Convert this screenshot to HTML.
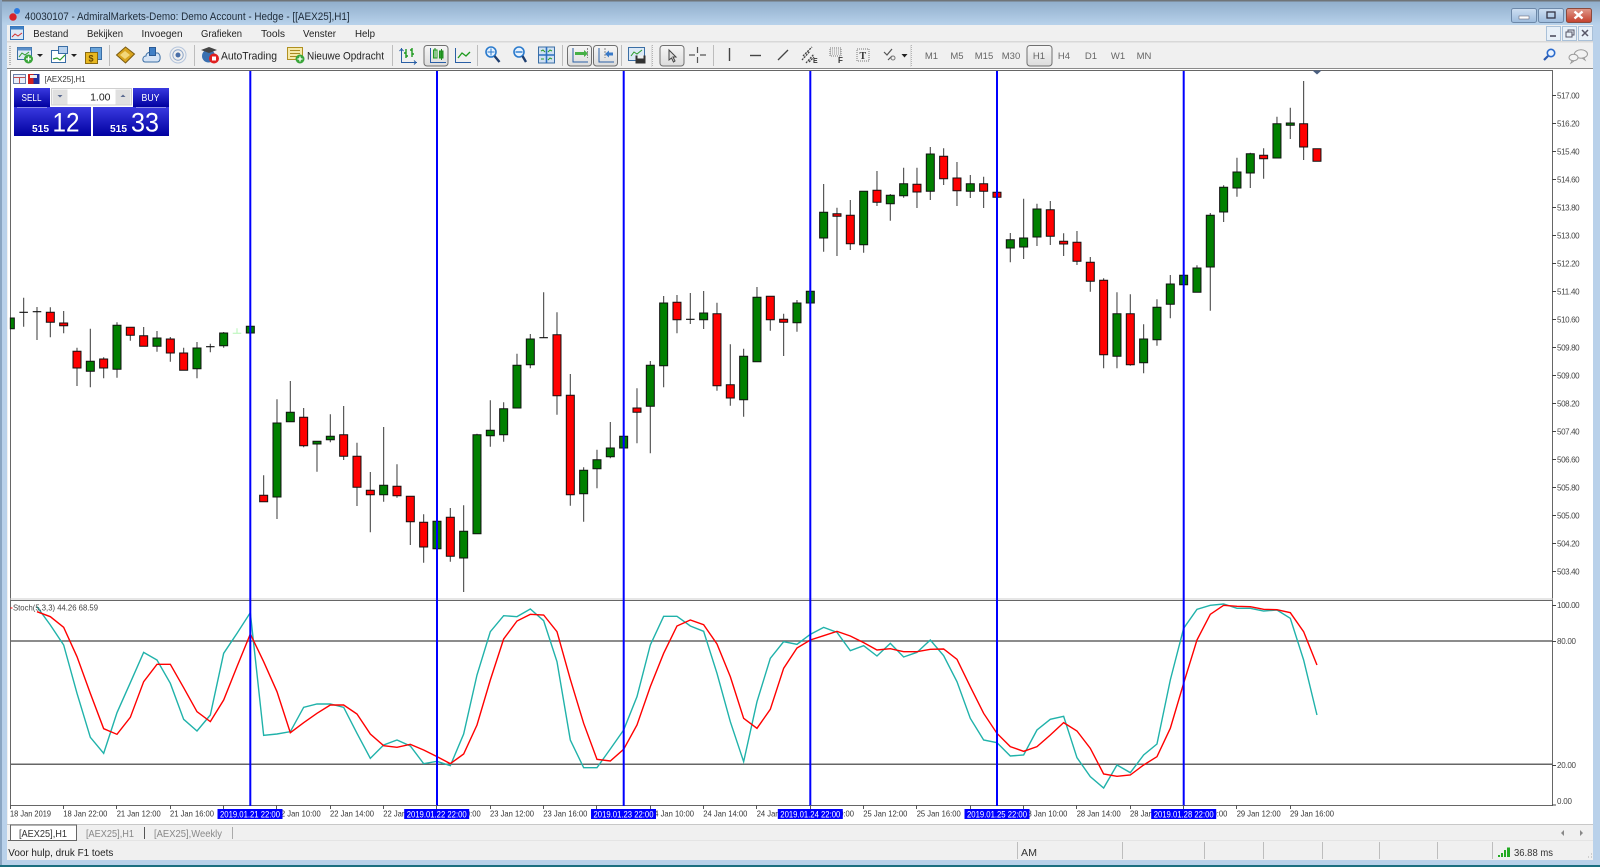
<!DOCTYPE html>
<html><head><meta charset="utf-8"><title>MT5</title>
<style>
html,body{margin:0;padding:0;width:1600px;height:867px;overflow:hidden;background:#b9d1ea}
svg{display:block;filter:blur(.35px);font-family:"Liberation Sans",sans-serif}
.a{font-size:8px;fill:#444}
.t{font-size:8.5px;fill:#333}
.m{font-size:10.5px;fill:#222}
.tf{font-size:9.5px;fill:#666;text-anchor:middle}
.ns{vector-effect:non-scaling-stroke;fill:none}
.hl{font-size:9px;fill:#fff}
</style></head><body>
<svg width="1600" height="867" viewBox="0 0 1600 867" xmlns="http://www.w3.org/2000/svg">
<defs>
<linearGradient id="tb" x1="0" y1="0" x2="0" y2="1"><stop offset="0" stop-color="#8eacca"/><stop offset="1" stop-color="#b8d2eb"/></linearGradient>
<linearGradient id="bl" x1="0" y1="0" x2="0" y2="1"><stop offset="0" stop-color="#3a3ae0"/><stop offset="1" stop-color="#0000a0"/></linearGradient>
<linearGradient id="bt" x1="0" y1="0" x2="0" y2="1"><stop offset="0" stop-color="#f6f6f6"/><stop offset="1" stop-color="#dcdcdc"/></linearGradient>
<linearGradient id="wb" x1="0" y1="0" x2="0" y2="1"><stop offset="0" stop-color="#cfe0f2"/><stop offset="1" stop-color="#9dbbdc"/></linearGradient>
<linearGradient id="wr" x1="0" y1="0" x2="0" y2="1"><stop offset="0" stop-color="#e09a8c"/><stop offset="1" stop-color="#c4402c"/></linearGradient>
</defs>
<!-- frame -->
<rect width="1600" height="867" fill="#b9d1ea"/>
<rect width="1600" height="25" fill="url(#tb)"/>
<rect width="1600" height="1.5" fill="#6f7478"/>
<rect x="0" y="0" width="2" height="867" fill="#8aa5c2"/>
<rect y="865" width="1600" height="2" fill="#1c6f80"/>
<rect x="7" y="25" width="1586" height="835" fill="#f0f0f0"/>
<rect x="7" y="41" width="1586" height="1.5" fill="#d8d8d8"/>
<rect x="7" y="68" width="1586" height="1" fill="#8a8a8a"/>
<rect x="8" y="69" width="1585" height="755" fill="#fff"/>
<rect x="7" y="824" width="1586" height="1" fill="#c8c8c8"/>
<rect x="7" y="840" width="1586" height="1" fill="#e4e4e4"/>
<!-- title -->
<circle cx="13" cy="17" r="3.7" fill="#d8232a"/><circle cx="17" cy="11" r="3" fill="#2a7ae0"/>
<text x="24.7" y="20" font-size="11" fill="#1d2a38" textLength="325" lengthAdjust="spacingAndGlyphs">40030107 - AdmiralMarkets-Demo: Demo Account - Hedge - [[AEX25],H1]</text>
<!-- window buttons -->
<rect x="1511.5" y="8.5" width="25" height="14" rx="2" fill="url(#wb)" stroke="#6d88a8"/><rect x="1519" y="16" width="10" height="3" fill="#fff" stroke="#556"  stroke-width=".5"/>
<rect x="1538.5" y="8.5" width="25" height="14" rx="2" fill="url(#wb)" stroke="#6d88a8"/><rect x="1547" y="12" width="8" height="6" fill="none" stroke="#334" stroke-width="1.3"/>
<rect x="1566.5" y="8.5" width="25" height="14" rx="2" fill="url(#wr)" stroke="#8a4a3c"/><path d="M1574.5 11.5l8 7M1582.5 11.5l-8 7" stroke="#fff" stroke-width="2.4"/>
<!-- menu -->
<rect x="10.5" y="26.5" width="13" height="13" fill="#dce8f5" stroke="#2f6fb5"/><rect x="10.5" y="26.5" width="13" height="3" fill="#3e7fc4"/><path d="M12 37l3-3 3 2 4-3" stroke="#d03030" fill="none"/>
<text class="m" x="33.3" y="37" textLength="35" lengthAdjust="spacingAndGlyphs">Bestand</text>
<text class="m" x="87" y="37" textLength="36" lengthAdjust="spacingAndGlyphs">Bekijken</text>
<text class="m" x="141.5" y="37" textLength="41" lengthAdjust="spacingAndGlyphs">Invoegen</text>
<text class="m" x="201" y="37" textLength="41" lengthAdjust="spacingAndGlyphs">Grafieken</text>
<text class="m" x="261" y="37" textLength="24" lengthAdjust="spacingAndGlyphs">Tools</text>
<text class="m" x="303" y="37" textLength="33" lengthAdjust="spacingAndGlyphs">Venster</text>
<text class="m" x="355" y="37" textLength="20" lengthAdjust="spacingAndGlyphs">Help</text>
<g fill="#e8f0f8" stroke="#a9c0d8"><rect x="1546.5" y="26.5" width="14" height="14"/><rect x="1562.5" y="26.5" width="14" height="14"/><rect x="1578.5" y="26.5" width="14" height="14"/></g>
<path d="M1550 36h6" stroke="#445" stroke-width="1.5"/><path d="M1566 32h6v5h-6zM1568 32v-2h6v5h-2" fill="none" stroke="#556"/><path d="M1582 30l6 6M1588 30l-6 6" stroke="#556" stroke-width="1.5"/>
<!-- toolbar -->
<g stroke="#bdbdbd"><path d="M109.5 45v21M194.5 45v21M392.5 45v21M477.5 45v21M562.5 45v21M621.5 45v21M713.5 45v21"/></g>
<path d="M10 46v20M652 45v22M911 45v22" stroke="#b5b5b5" stroke-dasharray="1 1" stroke-width="2"/>
<path d="M651.5 45v22M910.5 45v22" stroke="#ddd"/>
<!-- i1 -->
<rect x="17.5" y="47.5" width="14" height="12" fill="#dce9f6" stroke="#3a6ea5"/><rect x="17.5" y="47.5" width="14" height="3" fill="#5b8fc9"/><path d="M19 57l3-4 3 2 4-3" stroke="#2a9a2a" fill="none"/><circle cx="28.5" cy="59" r="4.5" fill="#3aa63a"/><path d="M26 59h5M28.5 56.5v5" stroke="#fff" stroke-width="1.3"/><path d="M37 54h6l-3 3z" fill="#222"/>
<!-- i2 -->
<rect x="51.5" y="50.5" width="14" height="12" fill="#fff" stroke="#3a6ea5"/><rect x="58.5" y="46.5" width="9" height="7" fill="#b9d3ef" stroke="#3a6ea5"/><path d="M53 59l4-1 3 2 5-5" stroke="#2a9a2a" fill="none" stroke-width="1.2"/><path d="M71 54h6l-3 3z" fill="#222"/>
<!-- i3 -->
<rect x="90.5" y="47.5" width="11" height="12" fill="#6aa4da" stroke="#3a6ea5"/><rect x="85.5" y="52.5" width="12" height="11" fill="#e8b820" stroke="#8a6a10"/><text x="88.5" y="61.5" font-size="9" font-weight="bold" fill="#6a4a00">$</text>
<!-- i4 -->
<path d="M116.5 55l9-8 9 7-9 9z" fill="#d9a520" stroke="#7a5a10"/><path d="M120 55l5-4 5 4-5 4z" fill="#f3d77a"/>
<!-- i5 -->
<path d="M145 62c-3 0-3-6 1-6 0-3 3-4 4-3h8c3 2 3 9-1 9z" fill="#d6e4f5" stroke="#3a6ea5"/><rect x="149.5" y="47.5" width="6" height="8" fill="#3f7fc6" stroke="#2a5a95"/>
<!-- i6 -->
<g fill="none"><circle cx="178" cy="55" r="8" stroke="#b5c5dc"/><circle cx="178" cy="55" r="5.2" stroke="#8ea6c8"/></g><circle cx="178" cy="55" r="2.5" fill="#4a6fa8"/>
<!-- hat -->
<circle cx="208.5" cy="56" r="6.5" fill="#3a70b0"/><path d="M201 50l8-3 8 3-8 3z" fill="#444"/><circle cx="214" cy="58.5" r="5" fill="#e02020"/><rect x="212" y="56.5" width="4" height="4" fill="#fff"/>
<text x="221" y="59.5" font-size="11" fill="#222" textLength="56" lengthAdjust="spacingAndGlyphs">AutoTrading</text>
<!-- order -->
<rect x="287.5" y="47.5" width="15" height="12" fill="#f6e9a8" stroke="#b09020"/><path d="M290 50.5h10M290 53.5h10M290 56.5h7" stroke="#a88a20"/><circle cx="300" cy="59" r="4.5" fill="#3aa63a"/><path d="M297.5 59h5M300 56.5v5" stroke="#fff" stroke-width="1.3"/>
<text x="307" y="59.5" font-size="11" fill="#222" textLength="77" lengthAdjust="spacingAndGlyphs">Nieuwe Opdracht</text>
<!-- chart type -->
<g fill="none" stroke="#2a5fa5"><path d="M401.5 48v14.5H417"/><path d="M399.5 51l2-2 2 2M414 60.5l2 2-2 2"/></g>
<path d="M406 49v9M406 53h-2M406 56h2M412 48v9M412 50h-2M412 54h2" stroke="#1e9a1e" stroke-width="1.4" fill="none"/>
<rect x="424" y="45.5" width="24" height="20.5" rx="3" fill="url(#bt)" stroke="#707070"/>
<path d="M430.5 48v14.5H446" fill="none" stroke="#2a5fa5"/><rect x="433.5" y="50" width="3.5" height="8" fill="#fff" stroke="#1e9a1e"/><rect x="439.5" y="51" width="3.5" height="7" fill="#2aa52a" stroke="#1e8a1e"/><path d="M435 48v10M441.5 49v11" stroke="#1e8a1e"/>
<g fill="none"><path d="M455.5 48v14.5H471" stroke="#2a5fa5"/><path d="M458 58l4-5 4 3 4-4" stroke="#1e9a1e" stroke-width="1.3"/></g>
<!-- zoom -->
<circle cx="491" cy="52" r="5" fill="#e6f2ff" stroke="#2a7acc" stroke-width="1.6"/><path d="M487.5 52h7M491 48.5v7" stroke="#2a7acc"/><path d="M494.5 56l5 6" stroke="#1f3f70" stroke-width="2.4"/>
<circle cx="519" cy="52" r="5" fill="#e6f2ff" stroke="#2a7acc" stroke-width="1.6"/><path d="M515.5 52h7" stroke="#2a7acc" stroke-width="1.4"/><path d="M522.5 56l3.5 6" stroke="#1f3f70" stroke-width="2.4"/>
<rect x="538.5" y="47" width="16" height="16" fill="#cfe0f3" stroke="#3a6ea5"/><path d="M546.5 47v16M538.5 55h16" stroke="#2a6fc0" stroke-width="1.6"/><path d="M541 51l2-1 2 2M548 52l2-2 2 1M541 59h3M548 60l2-2 2 1" stroke="#2a9a2a" fill="none"/>
<!-- shift btns -->
<rect x="567.5" y="45.5" width="24" height="20.5" rx="3" fill="url(#bt)" stroke="#707070"/><rect x="593.5" y="45.5" width="24" height="20.5" rx="3" fill="url(#bt)" stroke="#707070"/>
<path d="M573 48v14h15" fill="none" stroke="#2a5fa5"/><path d="M575 52h9v-2l4 3.5-4 3.5v-2h-9z" fill="#46b046"/><path d="M587.5 48v10" stroke="#888" stroke-dasharray="2 1"/>
<path d="M599 48v14h15" fill="none" stroke="#2a5fa5"/><path d="M613 52.5h-4v-2l-4 3.5 4 3.5v-2h4z" fill="#3a7ac8"/><path d="M605 48v10" stroke="#888" stroke-dasharray="2 1"/>
<rect x="628.5" y="47.5" width="16" height="13" fill="#dce9f6" stroke="#3a6ea5"/><path d="M631 56l3-4 3 2 5-4" stroke="#2a9a2a" fill="none"/><rect x="635.5" y="55.5" width="10" height="8" fill="#333"/><rect x="637.5" y="55.5" width="6" height="3" fill="#eee"/>
<!-- cursor -->
<rect x="660" y="45.5" width="24" height="20.5" rx="3" fill="url(#bt)" stroke="#707070"/><path d="M669 50l0 10 2.5-2 2 4 1.5-1-2-4h3z" fill="#ddd" stroke="#444"/>
<path d="M689 55h6M700 55h6M697.5 47v6M697.5 57v6" stroke="#555" stroke-width="1.2"/>
<path d="M729.5 48v13" stroke="#444" stroke-width="1.4"/><path d="M750 55.5h11" stroke="#444" stroke-width="1.4"/><path d="M778 60l10-10" stroke="#444" stroke-width="1.3"/>
<path d="M802 60l8-9M806 63l8-9M803 56l9-9M809 62l5-5" stroke="#444" fill="none" stroke-dasharray="2 1" stroke-width="1.3"/><text x="813" y="63" font-size="7" font-weight="bold" fill="#333">E</text>
<rect x="830" y="48" width="11" height="8" fill="none" stroke="#777" stroke-dasharray="1 1"/><path d="M830 50h11M830 52h11M830 54h11" stroke="#999" stroke-dasharray="1 1"/><text x="838" y="63" font-size="8" font-weight="bold" fill="#333">F</text>
<rect x="857" y="49" width="12" height="12" fill="none" stroke="#777" stroke-dasharray="1 1"/><text x="859.5" y="59" font-size="10" font-weight="bold" font-family="Liberation Serif" fill="#333">T</text>
<path d="M884 52l3 3 5-6M888 60l4-4" stroke="#555" fill="none" stroke-width="1.2"/><circle cx="893" cy="58" r="2" fill="none" stroke="#777"/><path d="M901.5 54h6l-3 3.5z" fill="#222"/>
<!-- timeframes -->
<rect x="1027" y="45.5" width="25" height="20.5" rx="3" fill="url(#bt)" stroke="#707070"/>
<text class="tf" x="931.5" y="59">M1</text><text class="tf" x="957" y="59">M5</text><text class="tf" x="984" y="59">M15</text><text class="tf" x="1011" y="59">M30</text><text class="tf" x="1039" y="59">H1</text><text class="tf" x="1064" y="59">H4</text><text class="tf" x="1091" y="59">D1</text><text class="tf" x="1118" y="59">W1</text><text class="tf" x="1144" y="59">MN</text>
<!-- right icons -->
<circle cx="1551" cy="53" r="3.7" fill="#eaf3ff" stroke="#2a6acc" stroke-width="1.6"/><path d="M1548 56l-4 4" stroke="#2a5ab0" stroke-width="2.2"/>
<ellipse cx="1581" cy="54" rx="6.5" ry="4.2" fill="#f2f2f2" stroke="#999"/><ellipse cx="1573.5" cy="57.5" rx="4.5" ry="3.3" fill="#f2f2f2" stroke="#999"/><path d="M1572 61l-1 2 3-2M1584 58l1 2-3-2" stroke="#999" fill="none"/>

<!-- chart borders -->
<path d="M10.5 70.5H1552.5V805.5H10.5z" fill="none" stroke="#666"/>
<path d="M10 599h1543" stroke="#ccc"/><path d="M10 600.5h1543" stroke="#666"/>
<path d="M1312.5 70.5h9l-4.5 4z" fill="#4a5f80"/>
<!-- h lines -->
<path d="M10.5 641H1552.5M10.5 764.3H1552.5" stroke="#666" stroke-width="1.5"/>

<!-- candles -->
<g transform="translate(10.33 0) scale(13.333 1)">
<path class="ns" stroke="#4a4a4a" stroke-width="1.1" d="M1 297.7V326.7M2 307V340M3 307.3V337.3M4 311V333.3M5 347.7V386M6 328.7V387.3M7 357.3V378.3M8 322.3V377.7M9 327.3V340.7M10 327V346.3M11 331V351.7M12 337V361.7M13 347.7V370.3M14 342V378.3M15 343.7V352.3M16 332V347.7M19 475.3V501.7M20 399.3V519M21 381V421.7M22 408V447.3M23 441.3V471.7M24 414.3V442.3M25 406V460M26 442.7V506M27 472V532.3M28 427V501.7M29 464.3V497.7M30 496.3V545M31 514.3V562.7M33 508V561.7M34 505.3V592M35 433.7V533.7M36 400.3V446.7M37 402.3V441.7M38 353.7V408M39 334V368.3M40 292.3V337.7M41 312.3V414.7M42 374V505.7M43 467.3V521.7M44 449.7V488.3M45 422V458.3M47 388.3V443.3M48 361V453.3M49 296V387.3M50 295V333.3M51 293V324M52 291V329M53 302.7V390.7M54 344.3V405.7M55 348.7V416.7M56 287V361.7M57 296.3V330.7M58 313.7V356M59 300V331.7M61 184V251.7M62 207.7V256M63 200V250M64 191.3V252.7M65 171V206M66 194V220.7M67 167.7V197.7M68 167.7V208M69 147V200M70 148.3V185M71 162V206M72 175V198M73 176.7V208M75 233V262.3M76 198.7V259M77 203.7V246M78 201V245M79 233.3V256M80 231V265M81 257V291.7M82 278.3V368.3M83 292.3V368.3M84 294.3V365.7M85 324.3V373.3M86 299.3V345.7M87 275V318.3M89 265.3V292.3M90 213V310.7M91 185.3V222M92 157.7V196.7M93 152.7V188M94 148.3V178.7M95 116.7V158M96 107.7V139M97 81V160"/>
<path class="ns" stroke="#111" stroke-width="1" style="fill:#008000" d="M0 318h.3V328.7H0zM5.7 361.3h.6V371.3h-.6zM7.7 325.3h.6V369.3h-.6zM10.7 338h.6V346.3h-.6zM13.7 348h.6V368.7h-.6zM15.7 333h.6V345.7h-.6zM17.7 326.3h.6V333h-.6zM19.7 423h.6V497h-.6zM20.7 412.3h.6V421.7h-.6zM22.7 441.3h.6V444h-.6zM23.7 436.3h.6V439.7h-.6zM27.7 485.3h.6V494.7h-.6zM31.7 521.3h.6V548.7h-.6zM33.7 531.3h.6V558h-.6zM34.7 434.7h.6V533.7h-.6zM35.7 430.3h.6V435.7h-.6zM36.7 408.7h.6V434.7h-.6zM37.7 365.3h.6V408h-.6zM38.7 339h.6V364.7h-.6zM42.7 470.3h.6V493.7h-.6zM43.7 459.7h.6V468.7h-.6zM44.7 448h.6V456.7h-.6zM45.7 436.3h.6V448h-.6zM47.7 365.3h.6V406.3h-.6zM48.7 303h.6V365.7h-.6zM51.7 313h.6V319.7h-.6zM54.7 356.3h.6V399.7h-.6zM55.7 297.3h.6V361.7h-.6zM58.7 303h.6V322.7h-.6zM59.7 291.3h.6V303h-.6zM60.7 212.3h.6V238h-.6zM63.7 191.3h.6V244.7h-.6zM65.7 195.3h.6V203.7h-.6zM66.7 183.7h.6V195.7h-.6zM68.7 154h.6V191.3h-.6zM71.7 183.7h.6V191.3h-.6zM74.7 239.7h.6V248h-.6zM75.7 238h.6V247h-.6zM76.7 209h.6V237h-.6zM82.7 313.7h.6V356.3h-.6zM84.7 339h.6V362.7h-.6zM85.7 307.3h.6V339.7h-.6zM86.7 284h.6V304.3h-.6zM87.7 275.3h.6V284.7h-.6zM88.7 268h.6V292.3h-.6zM89.7 215.3h.6V267h-.6zM90.7 187.3h.6V212h-.6zM91.7 172h.6V188h-.6zM92.7 153.7h.6V173h-.6zM94.7 123.7h.6V158h-.6zM95.7 123h.6V125.3h-.6z"/>
<path class="ns" stroke="#111" stroke-width="1" style="fill:#ff0000" d="M2.7 312.3h.6V322.3h-.6zM3.7 323h.6V325.7h-.6zM4.7 351.3h.6V368h-.6zM6.7 359h.6V368h-.6zM8.7 327.3h.6V335.3h-.6zM9.7 335.7h.6V346.3h-.6zM11.7 339h.6V353h-.6zM12.7 353h.6V370.3h-.6zM18.7 495.3h.6V501.7h-.6zM21.7 417.3h.6V445.7h-.6zM24.7 434.7h.6V456.3h-.6zM25.7 456.3h.6V487.3h-.6zM26.7 490.3h.6V494.7h-.6zM28.7 486.3h.6V495.7h-.6zM29.7 496.3h.6V521.7h-.6zM30.7 522.3h.6V547h-.6zM32.7 517.3h.6V556.3h-.6zM40.7 334.7h.6V395.7h-.6zM41.7 395.3h.6V494.7h-.6zM46.7 408h.6V412.3h-.6zM49.7 302.3h.6V319.7h-.6zM52.7 313.7h.6V385.7h-.6zM53.7 384.7h.6V398h-.6zM56.7 296.3h.6V319.7h-.6zM57.7 319.3h.6V322.3h-.6zM61.7 213.7h.6V216.3h-.6zM62.7 215.3h.6V243.7h-.6zM64.7 190.3h.6V202.3h-.6zM67.7 184.3h.6V192h-.6zM69.7 156.3h.6V178.7h-.6zM70.7 178h.6V190.7h-.6zM72.7 183.7h.6V191.3h-.6zM73.7 192.3h.6V197.3h-.6zM77.7 209.7h.6V236.3h-.6zM78.7 241.3h.6V244h-.6zM79.7 242.3h.6V261.3h-.6zM80.7 262.3h.6V281.3h-.6zM81.7 280.3h.6V354.7h-.6zM83.7 313.7h.6V364.7h-.6zM93.7 155.3h.6V158.7h-.6zM96.7 123.7h.6V147h-.6zM97.7 148.7h.6V161.3h-.6z"/>
<path class="ns" stroke="#111" stroke-width="1.1" d="M.68 312.3H1.32M1.68 311.7H2.32M14.68 346.7H15.32M39.68 337.7H40.32M50.68 319.3H51.32"/>
<path class="ns" stroke="#b5f5b5" stroke-width="1" d="M16.68 333.3H17.32M17 328.3V333.3"/>
</g>
<!-- stoch -->
<g transform="translate(10.33 590) scale(13.333 .33333)">
<polyline class="ns" stroke="#20b2aa" stroke-width="1.4" points="2,50 3,105 4,165 5,310 6,442 7,490 8,368 9,278 10,187 11,210 12,280 13,388 14,423 15,375 16,190 17,130 18,68 19,436 20,432 21,425 22,352 23,342 24,342 25,352 26,430 27,505 28,465 29,450 30,468 31,521 32,514 33,527 34,432 35,255 36,125 37,77 38,80 39,57 40,92 41,215 42,450 43,533 44,533 45,477 46,420 47,320 48,165 49,79 50,79 51,108 52,124 53,250 54,395 55,515 56,335 57,205 58,155 59,163 60,133 61,112 62,127 63,182 64,167 65,198 66,160 67,201 68,187 69,150 70,197 71,275 72,385 73,450 74,458 75,498 76,495 77,420 78,388 79,379 80,503 81,560 82,594 83,525 84,548 85,495 86,462 87,270 88,115 89,58 90,46 91,42 92,55 93,55 94,63 95,60 96,85 97,210 98,375"/>
<polyline class="ns" stroke="#ff0000" stroke-width="1.4" points="2,65 3,80 4,112 5,200 6,310 7,416 8,433 9,382 10,275 11,223 12,223 13,293 14,365 15,395 16,330 17,230 18,132 19,215 20,305 21,428 22,398 23,370 24,345 25,345 26,372 27,432 28,467 29,472 30,463 31,480 32,500 33,521 34,492 35,405 36,270 37,147 38,93 39,73 40,75 41,125 42,268 43,400 44,508 45,513 46,478 47,405 48,290 49,190 50,108 51,90 52,104 53,162 54,260 55,385 56,415 57,358 58,235 59,174 60,150 61,137 62,124 63,138 64,158 65,180 66,176 67,185 68,185 69,178 70,177 71,208 72,290 73,370 74,430 75,470 76,484 77,470 78,435 79,398 80,423 81,475 82,552 83,559 84,555 85,525 86,500 87,415 88,280 89,150 90,73 91,46 92,49 93,50 94,58 95,59 96,68 97,125 98,225"/>
</g>
<!-- vlines -->
<path d="M250.3 71V806M437 71V806M623.7 71V806M810.3 71V806M997 71V806M1183.7 71V806" stroke="#0000ff" stroke-width="2"/>
<!-- chart header -->
<rect x="13.5" y="74.5" width="12" height="9" fill="#e8eefa" stroke="#6a7faa"/><path d="M13.5 77.5h12M19.5 77.5v6" stroke="#c05050"/><rect x="28" y="74" width="5.5" height="10" fill="#d02020"/><rect x="33.5" y="74" width="6" height="10" fill="#2030a0"/><rect x="30" y="75" width="7" height="3" fill="#eee"/>
<text x="44.5" y="82" font-size="8.5" fill="#333" textLength="41" lengthAdjust="spacingAndGlyphs">[AEX25],H1</text>
<!-- trade panel -->
<rect x="14" y="88" width="36" height="19" fill="url(#bl)"/><rect x="133" y="88" width="36" height="19" fill="url(#bl)"/>
<rect x="14" y="107" width="77" height="29" fill="url(#bl)"/><rect x="93" y="107" width="76" height="29" fill="url(#bl)"/>
<path d="M17 107.5h30M136 107.5h30" stroke="#8f8fe8"/>
<rect x="51.5" y="88.5" width="80" height="16.5" fill="#fff" stroke="#cfcfcf"/>
<rect x="52.5" y="89.5" width="15" height="15" fill="#e0e0e0"/><rect x="115.5" y="89.5" width="15" height="15" fill="#e0e0e0"/>
<path d="M57.5 95h5l-2.5 2.5z" fill="#5a6a90"/><path d="M120.5 97h5l-2.5-2.5z" fill="#5a6a90"/>
<text x="31.5" y="101" font-size="10" fill="#fff" text-anchor="middle" textLength="20" lengthAdjust="spacingAndGlyphs">SELL</text>
<text x="150.5" y="101" font-size="10" fill="#fff" text-anchor="middle" textLength="18" lengthAdjust="spacingAndGlyphs">BUY</text>
<text x="110.5" y="100.5" font-size="10.5" fill="#222" text-anchor="end">1.00</text>
<text x="32" y="132" font-size="10" font-weight="bold" fill="#fff" textLength="17" lengthAdjust="spacingAndGlyphs">515</text>
<text x="52.5" y="131.5" font-size="27" fill="#fff" textLength="27" lengthAdjust="spacingAndGlyphs">12</text>
<text x="110" y="132" font-size="10" font-weight="bold" fill="#fff" textLength="17" lengthAdjust="spacingAndGlyphs">515</text>
<text x="131" y="131.5" font-size="27" fill="#fff" textLength="28" lengthAdjust="spacingAndGlyphs">33</text>
<!-- price ticks -->
<path d="M1552 95.5h4M1552 123.5h4M1552 151.5h4M1552 179.5h4M1552 207.5h4M1552 235.5h4M1552 263.5h4M1552 291.5h4M1552 319.5h4M1552 347.5h4M1552 375.5h4M1552 403.5h4M1552 431.5h4M1552 459.5h4M1552 487.5h4M1552 515.5h4M1552 543.5h4M1552 571.5h4M1552 605.5h4M1552 641.5h4M1552 765.5h4M1552 805h4" stroke="#444"/>
<g class="a" lengthAdjust="spacingAndGlyphs">
<text class="a" x="1557" y="98.5" textLength="22.6">517.00</text><text class="a" x="1557" y="126.5" textLength="22.6">516.20</text><text class="a" x="1557" y="154.5" textLength="22.6">515.40</text><text class="a" x="1557" y="182.5" textLength="22.6">514.60</text><text class="a" x="1557" y="210.5" textLength="22.6">513.80</text><text class="a" x="1557" y="238.5" textLength="22.6">513.00</text><text class="a" x="1557" y="266.5" textLength="22.6">512.20</text><text class="a" x="1557" y="294.5" textLength="22.6">511.40</text><text class="a" x="1557" y="322.5" textLength="22.6">510.60</text><text class="a" x="1557" y="350.5" textLength="22.6">509.80</text><text class="a" x="1557" y="378.5" textLength="22.6">509.00</text><text class="a" x="1557" y="406.5" textLength="22.6">508.20</text><text class="a" x="1557" y="434.5" textLength="22.6">507.40</text><text class="a" x="1557" y="462.5" textLength="22.6">506.60</text><text class="a" x="1557" y="490.5" textLength="22.6">505.80</text><text class="a" x="1557" y="518.5" textLength="22.6">505.00</text><text class="a" x="1557" y="546.5" textLength="22.6">504.20</text><text class="a" x="1557" y="574.5" textLength="22.6">503.40</text>
<text class="a" x="1557" y="608" textLength="22.6">100.00</text><text class="a" x="1557" y="644" textLength="19">80.00</text><text class="a" x="1557" y="768" textLength="19">20.00</text><text class="a" x="1557" y="804" textLength="15">0.00</text>
</g>
<!-- stoch label -->
<path d="M10.5 608h2" stroke="#f00"/>
<text x="13" y="610.5" font-size="8.5" fill="#444" textLength="85" lengthAdjust="spacingAndGlyphs">Stoch(5,3,3) 44.26 68.59</text>
<!-- time ticks -->
<path d="M10.5 805v4M63.5 805v4M116.5 805v4M170.5 805v4M223.5 805v4M276.5 805v4M330.5 805v4M383.5 805v4M436.5 805v4M490.5 805v4M543.5 805v4M596.5 805v4M650.5 805v4M703.5 805v4M756.5 805v4M810.5 805v4M863.5 805v4M916.5 805v4M970.5 805v4M1023.5 805v4M1076.5 805v4M1130.5 805v4M1183.5 805v4M1236.5 805v4M1290.5 805v4" stroke="#555"/>
<text class="t" x="10" y="816.5" textLength="41" lengthAdjust="spacingAndGlyphs">18 Jan 2019</text>
<text class="t" x="63.3" y="816.5" textLength="44" lengthAdjust="spacingAndGlyphs">18 Jan 22:00</text>
<text class="t" x="116.7" y="816.5" textLength="44" lengthAdjust="spacingAndGlyphs">21 Jan 12:00</text>
<text class="t" x="170" y="816.5" textLength="44" lengthAdjust="spacingAndGlyphs">21 Jan 16:00</text>
<text class="t" x="276.7" y="816.5" textLength="44" lengthAdjust="spacingAndGlyphs">22 Jan 10:00</text>
<text class="t" x="330" y="816.5" textLength="44" lengthAdjust="spacingAndGlyphs">22 Jan 14:00</text>
<text class="t" x="383.3" y="816.5" textLength="44" lengthAdjust="spacingAndGlyphs">22 Jan 18:00</text>
<text class="t" x="436.7" y="816.5" textLength="44" lengthAdjust="spacingAndGlyphs">23 Jan 10:00</text>
<text class="t" x="490" y="816.5" textLength="44" lengthAdjust="spacingAndGlyphs">23 Jan 12:00</text>
<text class="t" x="543.3" y="816.5" textLength="44" lengthAdjust="spacingAndGlyphs">23 Jan 16:00</text>
<text class="t" x="650" y="816.5" textLength="44" lengthAdjust="spacingAndGlyphs">24 Jan 10:00</text>
<text class="t" x="703.3" y="816.5" textLength="44" lengthAdjust="spacingAndGlyphs">24 Jan 14:00</text>
<text class="t" x="756.7" y="816.5" textLength="44" lengthAdjust="spacingAndGlyphs">24 Jan 18:00</text>
<text class="t" x="810" y="816.5" textLength="44" lengthAdjust="spacingAndGlyphs">25 Jan 10:00</text>
<text class="t" x="863.3" y="816.5" textLength="44" lengthAdjust="spacingAndGlyphs">25 Jan 12:00</text>
<text class="t" x="916.7" y="816.5" textLength="44" lengthAdjust="spacingAndGlyphs">25 Jan 16:00</text>
<text class="t" x="1023.3" y="816.5" textLength="44" lengthAdjust="spacingAndGlyphs">28 Jan 10:00</text>
<text class="t" x="1076.7" y="816.5" textLength="44" lengthAdjust="spacingAndGlyphs">28 Jan 14:00</text>
<text class="t" x="1130" y="816.5" textLength="44" lengthAdjust="spacingAndGlyphs">28 Jan 18:00</text>
<text class="t" x="1183.3" y="816.5" textLength="44" lengthAdjust="spacingAndGlyphs">29 Jan 10:00</text>
<text class="t" x="1236.7" y="816.5" textLength="44" lengthAdjust="spacingAndGlyphs">29 Jan 12:00</text>
<text class="t" x="1290" y="816.5" textLength="44" lengthAdjust="spacingAndGlyphs">29 Jan 16:00</text>
<!-- highlights -->
<g fill="#0000ff"><rect x="217.5" y="809" width="65" height="10"/><rect x="404.2" y="809" width="65" height="10"/><rect x="591" y="809" width="65" height="10"/><rect x="777.8" y="809" width="65" height="10"/><rect x="964.5" y="809" width="65" height="10"/><rect x="1151.2" y="809" width="65" height="10"/></g>
<text class="hl" x="220" y="817.5" textLength="60" lengthAdjust="spacingAndGlyphs">2019.01.21 22:00</text>
<text class="hl" x="406.7" y="817.5" textLength="60" lengthAdjust="spacingAndGlyphs">2019.01.22 22:00</text>
<text class="hl" x="593.5" y="817.5" textLength="60" lengthAdjust="spacingAndGlyphs">2019.01.23 22:00</text>
<text class="hl" x="780.3" y="817.5" textLength="60" lengthAdjust="spacingAndGlyphs">2019.01.24 22:00</text>
<text class="hl" x="967" y="817.5" textLength="60" lengthAdjust="spacingAndGlyphs">2019.01.25 22:00</text>
<text class="hl" x="1153.7" y="817.5" textLength="60" lengthAdjust="spacingAndGlyphs">2019.01.28 22:00</text>
<!-- tabs -->
<path d="M10.5 840.5V825H76.5V840.5" fill="#fff" stroke="#666"/><rect x="8" y="840" width="69" height="1" fill="#666"/>
<text x="19" y="837" font-size="10.5" fill="#333" textLength="48" lengthAdjust="spacingAndGlyphs">[AEX25],H1</text>
<text x="86" y="837" font-size="10.5" fill="#888" textLength="48" lengthAdjust="spacingAndGlyphs">[AEX25],H1</text>
<path d="M144.5 827v12" stroke="#555"/>
<text x="154" y="837" font-size="10.5" fill="#888" textLength="68" lengthAdjust="spacingAndGlyphs">[AEX25],Weekly</text>
<path d="M232.5 827v12" stroke="#aaa"/>
<path d="M1564 830l-3 3 3 3zM1580 830l3 3-3 3z" fill="#888"/>
<!-- status -->
<text x="8.3" y="856" font-size="10.5" fill="#222" textLength="105" lengthAdjust="spacingAndGlyphs">Voor hulp, druk F1 toets</text>
<text x="1021" y="856" font-size="10.5" fill="#333" textLength="16" lengthAdjust="spacingAndGlyphs">AM</text>
<path d="M1017.5 842v17M1122.5 842v17M1204.5 842v17M1263.5 842v17M1322.5 842v17M1379.5 842v17M1437.5 842v17M1492.5 842v17" stroke="#bdbdbd"/>
<path d="M1498 855h2v2h-2zM1501 853h2v4h-2zM1504 850h2v7h-2zM1507 847.5h3v9.5h-3z" fill="#22aa22"/>
<text x="1514" y="856" font-size="10.5" fill="#333" textLength="39" lengthAdjust="spacingAndGlyphs">36.88 ms</text>
<path d="M1591 857h1M1588 857h1M1591 854h1" stroke="#aaa"/>
</svg>
</body></html>
